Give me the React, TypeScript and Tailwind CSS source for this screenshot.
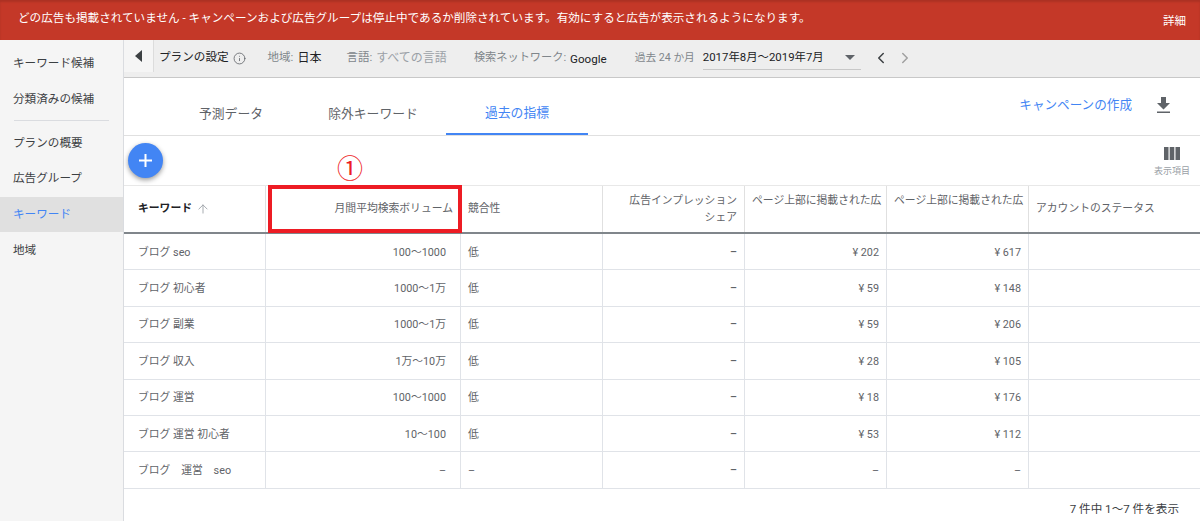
import { ChevronLeft, ChevronRight, ArrowUp, Info } from "lucide-react"

const rows = [
  ["ブログ seo", "100〜1000", "低", "–", "¥ 202", "¥ 617"],
  ["ブログ 初心者", "1000〜1万", "低", "–", "¥ 59", "¥ 148"],
  ["ブログ 副業", "1000〜1万", "低", "–", "¥ 59", "¥ 206"],
  ["ブログ 収入", "1万〜10万", "低", "–", "¥ 28", "¥ 105"],
  ["ブログ 運営", "100〜1000", "低", "–", "¥ 18", "¥ 176"],
  ["ブログ 運営 初心者", "10〜100", "低", "–", "¥ 53", "¥ 112"],
  ["ブログ　運営　seo", "–", "–", "–", "–", "–"],
]

const gridCols = "grid grid-cols-[142px_195px_142px_142px_142px_142px_1fr]"

function SideItem({ label, active }: { label: string; active?: boolean }) {
  return (
    <div className={`flex h-[35.6px] items-center pl-[13px] text-[11.6px] ${active ? "bg-[#e0e0e0] text-[#4285f4]" : "text-[#3c4043]"}`}>
      {label}
    </div>
  )
}

function Filter({ label, value, muted }: { label: string; value: string; muted?: boolean }) {
  return (
    <div className="flex items-center text-[11.5px] text-[#80868b]">
      <span>{label}:</span>
      <span className={`ml-1 text-[12px] ${muted ? "text-[#9aa0a6]" : "text-[#202124]"}`}>{value}</span>
    </div>
  )
}

export default function App() {
  return (
    <div className="flex h-[521px] w-[1200px] flex-col overflow-hidden bg-white font-['Roboto','Noto_Sans_CJK_JP',sans-serif]">
      <div className="flex h-[40px] shrink-0 items-start justify-between bg-[#c43828] pl-[18px] pr-[14px] pt-[10px] text-[11.6px] text-white shadow-[inset_0_2px_2px_rgba(0,0,0,0.12)]">
        <span>どの広告も掲載されていません - キャンペーンおよび広告グループは停止中であるか削除されています。有効にすると広告が表示されるようになります。</span>
        <span className="mt-[3px] text-[11.500px]">詳細</span>
      </div>

      <div className="flex min-h-0 flex-1">
        <aside className="w-[124px] shrink-0 border-r border-[#dadce0] bg-[#f5f5f5] pt-[6px]">
          <SideItem label="キーワード候補" />
          <SideItem label="分類済みの候補" />
          <div className="mx-[14px] mb-[4.5px] mt-[3px] h-px bg-[#dadce0]" />
          <SideItem label="プランの概要" />
          <SideItem label="広告グループ" />
          <SideItem label="キーワード" active />
          <SideItem label="地域" />
        </aside>

        <main className="flex min-w-0 flex-1 flex-col">
          <div className="flex h-[38px] shrink-0 items-center border-b border-[#c8c8c8] bg-[#eeeeee] pb-[1px]">
            <div className="flex h-[32px] w-[30px] items-center justify-center self-start border-r border-[#dcdcdc] bg-[#f5f5f5]">
              <svg width="8" height="12" viewBox="0 0 8 12"><path d="M7 0v12L0 6z" fill="#3c4043" /></svg>
            </div>
            <span className="ml-[5px] text-[11.6px] text-[#202124]">プランの設定</span>
            <Info className="ml-[4px] h-[13px] w-[13px] text-[#5f6368]" strokeWidth={1.5} />
            <div className="ml-[22px]"><Filter label="地域" value="日本" /></div>
            <div className="ml-[25px]"><Filter label="言語" value="すべての言語" muted /></div>
            <div className="ml-[27px] flex items-center text-[11.2px] text-[#80868b]">
              <span>検索ネットワーク:</span>
              <span className="ml-[4px] mt-[3px] text-[11.6px] text-[#202124]">Google</span>
            </div>
            <span className="ml-[28px] text-[10.7px] text-[#80868b]">過去 24 か月</span>
            <div className="ml-[8px] flex h-[24px] w-[158px] items-center justify-between border-b border-[#c8c8c8] pr-[6px] text-[11.4px] text-[#202124]">
              <span>2017年8月～2019年7月</span>
              <svg width="10" height="5" viewBox="0 0 10 5"><path d="M0 0h10L5 5z" fill="#5f6368" /></svg>
            </div>
            <ChevronLeft className="ml-[11px] h-[18px] w-[18px] text-[#3c4043]" strokeWidth={2} />
            <ChevronRight className="ml-[6px] h-[18px] w-[18px] text-[#a0a0a0]" strokeWidth={2} />
          </div>

          <div className="flex h-[58px] shrink-0 items-stretch justify-between border-b border-[#e0e0e0] pl-[46px] pr-[28px]">
            <div className="flex">
              <div className="flex w-[122px] items-center justify-center pt-[14px] text-[12.8px] text-[#5f6368]">予測データ</div>
              <div className="ml-[8px] flex w-[146px] items-center justify-center pt-[14px] text-[12.8px] text-[#5f6368]">除外キーワード</div>
              <div className="flex w-[142px] items-center justify-center border-b-2 border-[#4285f4] pt-[15px] text-[12.8px] text-[#4285f4]">過去の指標</div>
            </div>
            <div className="flex items-center pb-[3px]">
              <span className="text-[12.6px] text-[#4285f4]">キャンペーンの作成</span>
              <svg className="ml-[24px]" width="16" height="18" viewBox="0 0 16 18"><path d="M5 1h5v6h4l-6.500 6.500L1 7h4zM1 15.500h13V17H1z" fill="#5f6368" /></svg>
            </div>
          </div>

          <div className="flex h-[49px] shrink-0 items-start justify-between pl-[4px] pr-[10px]">
            <div className="mt-[7px] flex h-[35px] w-[35px] items-center justify-center rounded-full bg-[#4285f4] text-white shadow-[0_2px_5px_rgba(0,0,0,0.4)]">
              <svg width="13" height="13" viewBox="0 0 13 13"><path d="M5.500 0h2v5.500H13v2H7.500V13h-2V7.500H0v-2h5.500z" fill="#fff" /></svg>
            </div>
            <div className="mt-[11px] flex flex-col items-center">
              <svg width="16" height="13" viewBox="0 0 16 13"><path d="M0 0h4.500v13H0zM5.700 0h4.600v13H5.700zM11.500 0H16v13h-4.500z" fill="#5f6368" /></svg>
              <span className="mt-[7px] text-[9px] leading-none text-[#9aa0a6]">表示項目</span>
            </div>
          </div>

          <div className="relative">
            <span className="absolute left-[213px] top-[-33px] text-[26px] leading-[34px] text-[#ed1c24]">①</span>
            <div className={`${gridCols} h-[49px] border-y border-t-[#e8e8e8] border-b-[#80868b] border-b-2 text-[10.8px] text-[#5f6368]`}>
              <div className="flex items-center border-r border-[#e0e0e0] pl-[14px] font-bold text-[#202124]">
                キーワード
                <ArrowUp className="ml-[4px] h-[14px] w-[14px] text-[#9aa0a6]" strokeWidth={1.5} />
              </div>
              <div className="relative flex items-center justify-end border-r border-[#e0e0e0] pr-[7px]">
                月間平均検索ボリューム
                <div className="absolute bottom-[-1px] left-[2px] right-[-2px] top-[-1px] border-4 border-[#ed1c24]" />
              </div>
              <div className="flex items-center border-r border-[#e0e0e0] pl-[7px]">競合性</div>
              <div className="flex flex-col justify-center border-r border-[#e0e0e0] pr-[7px] text-right leading-[17px]">
                <span>広告インプレッション</span>
                <span>シェア</span>
              </div>
              <div className="overflow-hidden whitespace-nowrap border-r border-[#e0e0e0] pl-[7px] pt-[7px]">ページ上部に掲載された広</div>
              <div className="overflow-hidden whitespace-nowrap border-r border-[#e0e0e0] pl-[7px] pt-[7px]">ページ上部に掲載された広</div>
              <div className="flex items-center pl-[7px]">アカウントのステータス</div>
            </div>

            {rows.map((r) => (
              <div key={r[0]} className={`${gridCols} h-[36.4px] border-b border-[#e0e3e8] text-[10.8px] text-[#5f6368]`}>
                <div className="flex items-center border-r border-[#e0e3e8] pl-[14px] pt-[2px]">{r[0]}</div>
                <div className="flex items-center justify-end border-r border-[#e0e3e8] pr-[14px] pt-[2px]">{r[1]}</div>
                <div className="flex items-center border-r border-[#e0e3e8] pl-[7px] pt-[2px]">{r[2]}</div>
                <div className="flex items-center justify-end border-r border-[#e0e3e8] pr-[7px] pt-[2px] font-medium">{r[3]}</div>
                <div className="flex items-center justify-end border-r border-[#e0e3e8] pr-[7px] pt-[2px]">{r[4]}</div>
                <div className="flex items-center justify-end border-r border-[#e0e3e8] pr-[7px] pt-[2px]">{r[5]}</div>
                <div />
              </div>
            ))}

            <div className="pr-[21px] pt-[12px] text-right text-[11.6px] text-[#3c4043]">7 件中 1〜7 件を表示</div>
          </div>
        </main>
      </div>
    </div>
  )
}
